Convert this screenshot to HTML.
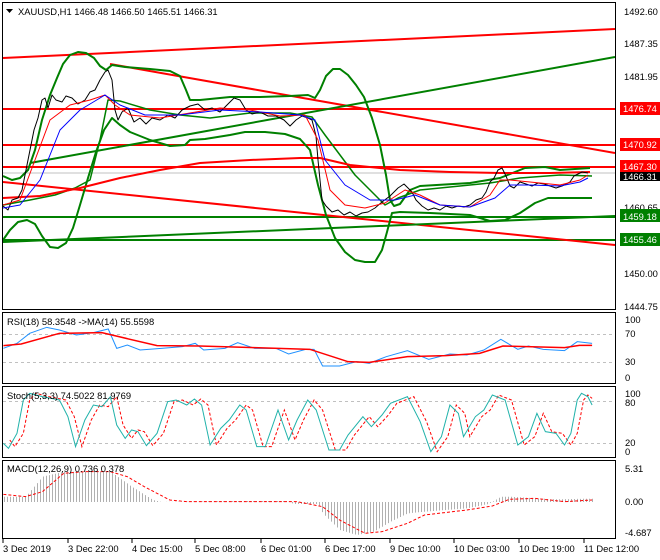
<!DOCTYPE html>
<html><head><meta charset="utf-8"><style>
html,body{margin:0;padding:0;background:#fff;}
body{width:660px;height:560px;overflow:hidden;position:relative;font-family:"Liberation Sans",sans-serif;}
svg{position:absolute;left:0;top:0;}
text{font-family:"Liberation Sans",sans-serif;font-size:9.4px;fill:#000;}
</style></head><body>
<svg width="660" height="560" viewBox="0 0 660 560">
<defs><clipPath id="c"><rect x="3" y="3" width="612" height="305"/></clipPath></defs>
<rect x="2.5" y="2.5" width="613" height="307" fill="none" stroke="#000"/>
<rect x="2.5" y="312.5" width="613" height="71" fill="none" stroke="#000"/>
<rect x="2.5" y="386.5" width="613" height="71" fill="none" stroke="#000"/>
<rect x="2.5" y="460.5" width="613" height="78" fill="none" stroke="#000"/>
<g clip-path="url(#c)" fill="none" stroke-linejoin="round">
<line x1="3" y1="173" x2="615" y2="173" stroke="#c0c0c0" stroke-width="1"/>
<line x1="3" y1="109" x2="615" y2="109" stroke="#f00" stroke-width="2"/>
<line x1="3" y1="145" x2="615" y2="145" stroke="#f00" stroke-width="2"/>
<line x1="3" y1="167" x2="615" y2="167" stroke="#f00" stroke-width="2"/>
<line x1="3" y1="217" x2="615" y2="217" stroke="#008000" stroke-width="2"/>
<line x1="3" y1="240" x2="615" y2="240" stroke="#008000" stroke-width="2"/>
<line x1="3" y1="58" x2="615" y2="29" stroke="#f00" stroke-width="2"/>
<line x1="110" y1="64" x2="615" y2="153" stroke="#f00" stroke-width="2"/>
<line x1="3" y1="182" x2="615" y2="245" stroke="#f00" stroke-width="2"/>
<line x1="30" y1="163" x2="615" y2="57" stroke="#008000" stroke-width="2"/>
<line x1="3" y1="242" x2="615" y2="216" stroke="#008000" stroke-width="2"/>
<!-- upper band -->
<polyline stroke="#008000" stroke-width="2" points="3,176 12,180 20,178 28,170 35,150 42,120 50,95 57,78 63,64 70,55 78,52 86,53 94,58 100,66 106,70 112,65 125,67 150,69 170,71 180,76 186,90 190,100 200,100 230,97 260,97 290,96 308,95 315,98 320,90 326,76 333,69 340,69 348,75 356,85 364,97 372,118 380,145 386,175 390,200 394,206 400,204 410,190 420,186 470,183 500,178 525,168 545,167 560,170 590,168"/>
<!-- lower band -->
<polyline stroke="#008000" stroke-width="2" points="3,240 10,230 18,222 27,220 35,224 42,236 50,247 58,248 66,243 73,228 80,205 88,178 96,152 104,130 112,118 120,125 130,132 150,140 170,146 185,145 190,140 205,139 230,135 245,132 265,132 285,134 300,139 310,150 318,185 326,215 335,238 345,252 355,260 365,262 375,262 382,250 387,232 392,213 400,212 430,213 470,215 490,221 505,220 520,213 535,203 548,198 560,198 592,198"/>
<!-- middle band -->
<polyline stroke="#008000" stroke-width="1.5" points="3,205 30,200 55,195 75,188 90,180 100,140 108,100 120,101 150,110 180,115 210,118 250,113 290,113 312,117 325,135 340,155 355,175 370,190 385,205 398,198 420,190 470,185 490,183 520,178 560,175 592,176"/>
<polyline stroke="#f00" stroke-width="2" points="3,198 40,196 80,188 120,178 160,170 200,163 250,160 300,158 320,158 350,165 400,170 450,172 500,173 550,173 590,172"/>
<!-- price -->
<polyline stroke="#000" stroke-width="1" points="3,206 8,210 12,200 18,198 22,190 25,175 28,160 30,150 34,130 38,118 42,100 45,98 48,108 52,95 56,100 62,102 66,96 72,98 78,104 85,100 90,92 95,90 100,80 105,72 108,70 112,80 115,110 118,120 122,112 128,108 134,122 140,118 146,124 152,118 160,120 168,115 175,118 182,110 190,106 198,104 205,110 212,108 220,112 228,104 234,98 240,100 246,110 252,114 260,112 268,116 276,116 284,120 290,126 296,120 302,116 308,118 312,120 316,136 318,160 322,200 326,206 332,212 338,210 344,215 350,212 356,216 362,213 368,212 375,208 382,202 390,196 398,188 404,184 408,188 412,192 416,200 422,206 428,210 434,208 440,210 446,206 452,208 458,206 464,207 470,205 476,200 482,198 486,192 490,182 494,178 498,170 502,168 506,176 510,186 514,188 520,182 526,184 532,186 538,183 544,184 550,186 556,188 562,186 566,184 570,182 574,176 578,174 582,172 588,173"/>
<polyline stroke="#f00" stroke-width="1" points="3,205 20,200 35,160 50,120 70,105 90,100 105,95 115,105 130,115 160,118 190,113 220,108 250,110 280,116 305,115 318,140 330,190 345,205 365,208 385,203 405,190 420,195 440,205 470,207 490,195 500,180 510,180 530,182 560,185 580,180 588,175"/>
<polyline stroke="#00f" stroke-width="1" points="3,208 20,205 40,180 60,130 80,110 105,95 120,105 145,115 180,115 220,110 260,112 300,115 315,120 325,160 345,185 370,200 395,200 415,195 440,205 470,207 495,198 510,185 530,185 560,186 580,182 588,178"/>
</g>
<polygon points="6,9 13,9 9.5,13" fill="#000"/>
<text x="18" y="15">XAUUSD,H1  1466.48 1466.50 1465.51 1466.31</text>
<g>
<text x="624" y="15">1492.60</text>
<text x="624" y="47">1487.35</text>
<text x="624" y="80">1481.95</text>
<text x="624" y="211">1460.65</text>
<text x="624" y="277">1450.00</text>
<text x="624" y="310">1444.75</text>
<rect x="620" y="102" width="40" height="13" fill="#f00"/><text x="623" y="112" style="fill:#fff">1476.74</text>
<rect x="620" y="138" width="40" height="13" fill="#f00"/><text x="623" y="148" style="fill:#fff">1470.92</text>
<rect x="620" y="160" width="40" height="12" fill="#f00"/><text x="623" y="170" style="fill:#fff">1467.30</text>
<rect x="620" y="172" width="40" height="9" fill="#000"/><text x="623" y="180" style="fill:#fff">1466.31</text>
<rect x="620" y="209" width="40" height="13" fill="#008000"/><text x="623" y="220" style="fill:#fff">1459.18</text>
<rect x="620" y="233" width="40" height="13" fill="#008000"/><text x="623" y="243" style="fill:#fff">1455.46</text>
<text x="625" y="323">100</text><text x="625" y="337">70</text><text x="625" y="365">30</text><text x="625" y="381">0</text>
<text x="625" y="397">100</text><text x="625" y="406">80</text><text x="625" y="446">20</text><text x="625" y="455">0</text>
<text x="625" y="472">5.31</text><text x="625" y="505">0.00</text><text x="625" y="536">-4.687</text>
</g>
<g stroke="#c0c0c0" stroke-dasharray="3,3" stroke-width="1">
<line x1="3" y1="334.5" x2="615" y2="334.5"/><line x1="3" y1="362.5" x2="615" y2="362.5"/>
<line x1="3" y1="401.5" x2="615" y2="401.5"/><line x1="3" y1="443.5" x2="615" y2="443.5"/>
</g>
<g id="hist" stroke="#b0b0b0" stroke-width="1"></g>
<g transform="translate(0,300) scale(0.42444,0.33333)" fill="none">
<polyline vector-effect="non-scaling-stroke" stroke="#1e90ff" stroke-width="1" points="8,145 40,130 70,100 110,82 140,90 180,105 220,98 255,87 275,145 300,135 330,150 380,145 430,140 460,130 480,150 530,145 560,128 600,145 650,145 680,162 720,148 740,148 760,198 800,198 840,185 870,190 910,170 960,152 1010,178 1060,162 1100,165 1140,150 1180,118 1220,148 1245,138 1280,148 1330,152 1360,125 1395,130"/>
<polyline vector-effect="non-scaling-stroke" stroke="#f00" stroke-width="1.5" points="8,137 50,132 140,100 240,98 280,110 370,137 470,138 600,143 730,148 820,185 870,187 960,170 1050,167 1130,160 1185,138 1330,143 1365,136 1395,136"/>
<polyline vector-effect="non-scaling-stroke" stroke="#f00" stroke-width="1" stroke-dasharray="3,2" transform="translate(15,0)" points="8,420 20,440 40,400 55,300 70,280 100,290 140,300 160,350 178,440 200,360 220,315 240,320 260,290 275,375 295,415 310,390 325,395 345,437 370,400 395,305 415,300 440,315 458,297 475,315 495,435 520,385 540,360 565,315 580,330 605,440 625,440 655,330 680,420 700,360 725,300 745,330 775,450 800,450 820,405 855,350 875,380 900,345 920,310 960,290 990,365 1015,455 1040,410 1060,315 1080,340 1092,410 1120,350 1140,330 1160,285 1190,300 1220,435 1245,410 1265,340 1285,395 1310,400 1330,435 1345,400 1360,300 1370,285 1380,295"/>
<polyline vector-effect="non-scaling-stroke" stroke="#20b2aa" stroke-width="1" points="8,430 20,445 40,400 55,300 70,280 100,290 140,300 160,350 178,440 200,360 220,315 240,320 260,290 275,375 295,415 310,390 325,395 345,437 370,400 395,305 415,300 440,315 458,297 475,315 495,435 520,385 540,360 565,315 580,330 605,440 625,440 655,330 680,420 700,360 725,300 745,330 775,450 800,450 820,405 855,350 875,380 900,345 920,310 960,290 990,365 1015,455 1040,410 1060,315 1080,340 1092,410 1120,350 1140,330 1160,285 1190,300 1220,435 1245,410 1265,340 1285,395 1310,400 1330,435 1345,400 1360,300 1370,280 1385,290 1395,315"/>
<polyline vector-effect="non-scaling-stroke" stroke="#f00" stroke-width="1" stroke-dasharray="3,2" points="8,583 60,590 100,575 150,520 200,515 260,515 300,530 340,560 400,600 440,605 700,605 760,620 800,660 860,700 900,695 960,670 1000,645 1100,630 1160,618 1200,598 1260,595 1330,605 1395,600"/>
</g>
<text x="7" y="325">RSI(18) 58.3548  -&gt;MA(14) 55.5598</text>
<text x="7" y="399">Stoch(5,3,3) 74.5022 81.9769</text>
<text x="7" y="472">MACD(12,26,9) 0.736 0.378</text>
<g stroke="#000"><line x1="3" y1="539" x2="3" y2="543"/><line x1="68" y1="539" x2="68" y2="543"/><line x1="132" y1="539" x2="132" y2="543"/><line x1="195" y1="539" x2="195" y2="543"/><line x1="261" y1="539" x2="261" y2="543"/><line x1="325" y1="539" x2="325" y2="543"/><line x1="390" y1="539" x2="390" y2="543"/><line x1="454" y1="539" x2="454" y2="543"/><line x1="519" y1="539" x2="519" y2="543"/><line x1="584" y1="539" x2="584" y2="543"/></g>
<text x="3" y="552">3 Dec 2019</text><text x="68" y="552">3 Dec 22:00</text><text x="132" y="552">4 Dec 15:00</text><text x="195" y="552">5 Dec 08:00</text><text x="261" y="552">6 Dec 01:00</text><text x="325" y="552">6 Dec 17:00</text><text x="390" y="552">9 Dec 10:00</text><text x="454" y="552">10 Dec 03:00</text><text x="519" y="552">10 Dec 19:00</text><text x="584" y="552">11 Dec 12:00</text>
</svg>
<script>
(function(){
var pts=[[8,590],[60,590],[100,530],[150,515],[260,515],[310,560],[360,600],[380,606],[560,603],[680,603],[690,612],[750,612],[760,640],[800,690],[840,705],[880,695],[920,665],[960,640],[1000,635],[1100,625],[1150,612],[1180,590],[1200,590],[1300,598],[1400,596]];
function v(x){for(var i=0;i<pts.length-1;i++){if(x>=pts[i][0]&&x<=pts[i+1][0]){var t=(x-pts[i][0])/(pts[i+1][0]-pts[i][0]);return pts[i][1]+t*(pts[i+1][1]-pts[i][1]);}}return 606;}
var g=document.getElementById('hist'),ns='http://www.w3.org/2000/svg';
for(var x=4;x<=592;x+=3){var zy=v(x/0.42444);var y=300+zy/3;var l=document.createElementNS(ns,'line');l.setAttribute('x1',x+0.5);l.setAttribute('x2',x+0.5);l.setAttribute('y1',502);l.setAttribute('y2',y.toFixed(1));g.appendChild(l);}
})();
</script>
</body></html>
